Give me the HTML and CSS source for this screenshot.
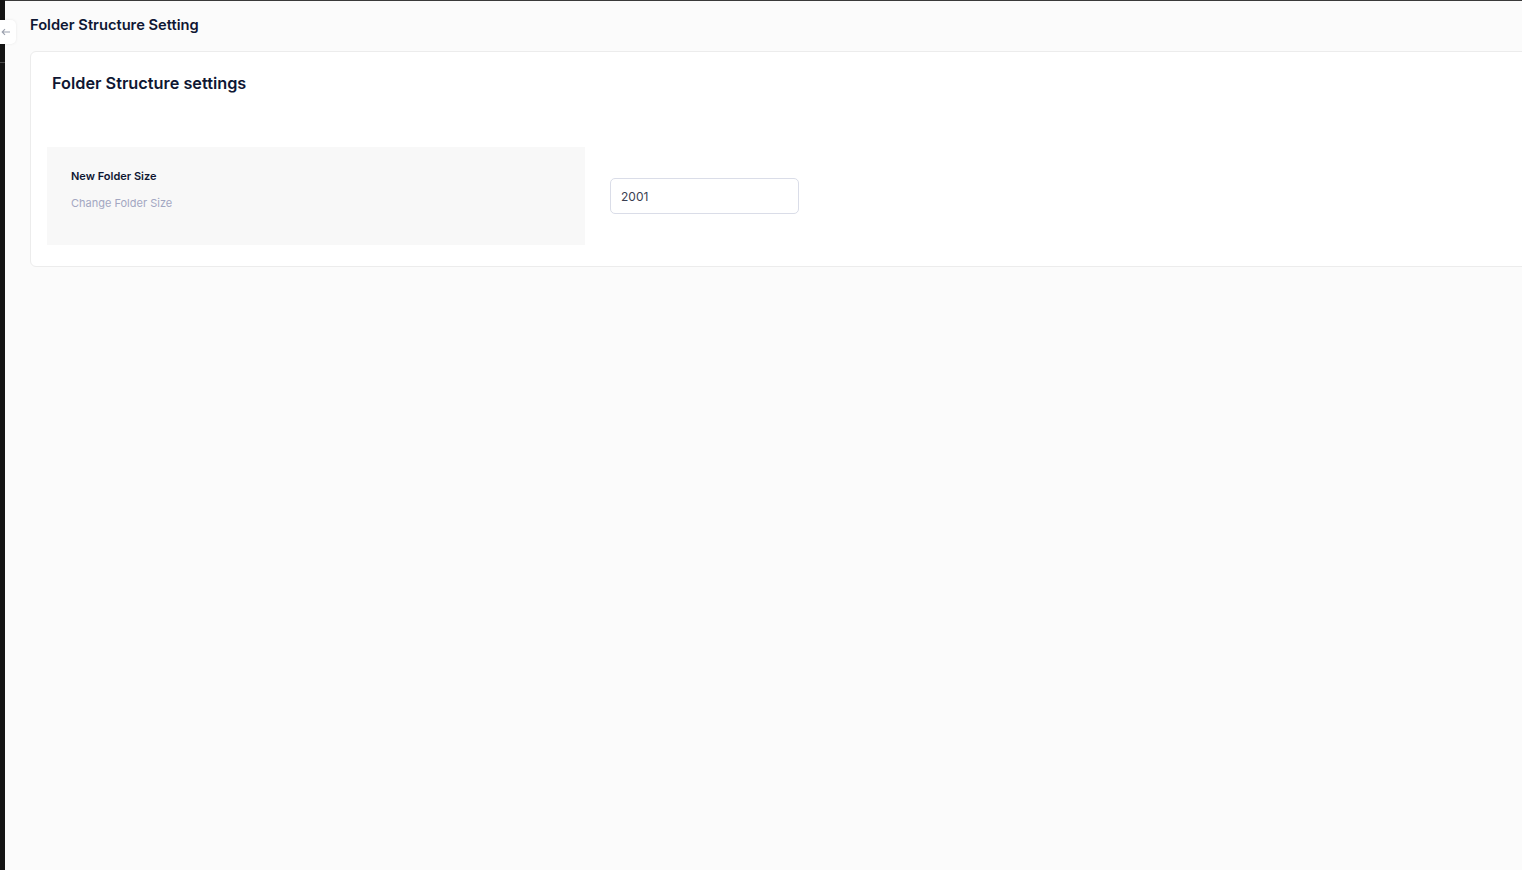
FILE: index.html
```html
<!DOCTYPE html>
<html>
<head>
<meta charset="utf-8">
<link rel="stylesheet" href="styles.css">
</head>
<body>
<div class="app">
  <aside class="rail"><div class="rail-sep"></div></aside>
  <button class="back" aria-label="Back">
    <svg width="10" height="8" viewBox="0 0 10 8"><path d="M9 4H1.5M4 1.2L1.2 4 4 6.8" fill="none" stroke="#9aa0ad" stroke-width="1.1"/></svg>
  </button>
  <main class="main">
    <header class="page-head">Folder Structure Setting</header>
    <section class="card">
      <h2 class="card-title">Folder Structure settings</h2>
      <div class="row">
        <div class="info">
          <div class="label">New Folder Size</div>
          <div class="hint">Change Folder Size</div>
        </div>
        <input class="field" type="text" value="2001">
      </div>
    </section>
  </main>
</div>
</body>
</html>
```

FILE: styles.css
```css
* { box-sizing: border-box; }
html, body { margin: 0; padding: 0; height: 100%; }
body {
  font-family: Inter, "Noto Sans", "Liberation Sans", sans-serif;
  color: #0f1733;
  background: #fbfbfb;
  overflow: hidden;
}
.app { display: flex; height: 870px; position: relative; }
.rail {
  width: 5px;
  flex: none;
  background: #141414;
  position: relative;
}
.rail-sep {
  position: absolute;
  left: 0; top: 62px;
  width: 5px; height: 1px;
  background: #4a4a4a;
}
.back {
  position: absolute;
  left: 0; top: 20px;
  width: 16px; height: 24px;
  border: none;
  padding: 0;
  background: #fff;
  border-radius: 0 5px 5px 0;
  box-shadow: 0 0 3px rgba(0,0,0,0.08);
  display: flex; align-items: center; justify-content: flex-start;
  padding-left: 1px;
}
.main {
  flex: 1;
  min-width: 0;
  border-top: 1px solid #3a3a3a;
  background: #fbfbfb;
  padding-left: 25px;
  overflow: hidden;
}
.page-head {
  height: 50px;
  padding-top: 14px;
  font-size: 14.7px;
  line-height: 20px;
  font-weight: 600;
  color: #0f1733;
}
.card {
  margin-right: -12px;
  background: #fff;
  border: 1px solid #ececec;
  border-radius: 6px;
  padding: 19px 16px 21px 16px;
}
.card-title {
  margin: 0 0 52px 5px;
  font-size: 16.3px;
  line-height: 24px;
  font-weight: 600;
  color: #0f1733;
}
.row {
  display: flex;
  align-items: center;
  gap: 25px;
}
.info {
  width: 538px;
  background: #f8f8f8;
  padding: 21px 24px 34px 24px;
}
.label {
  font-size: 11px;
  line-height: 16px;
  font-weight: 600;
  color: #0f1733;
}
.hint {
  margin-top: 11px;
  font-size: 11px;
  line-height: 16px;
  color: #a3a7c2;
}
.field {
  width: 189px;
  height: 36px;
  border: 1px solid #dadde8;
  border-radius: 5px;
  padding: 0 10px;
  font-family: Inter, "Noto Sans", "Liberation Sans", sans-serif;
  font-size: 12px;
  color: #3a3f52;
  background: #fff;
  outline: none;
}
```
